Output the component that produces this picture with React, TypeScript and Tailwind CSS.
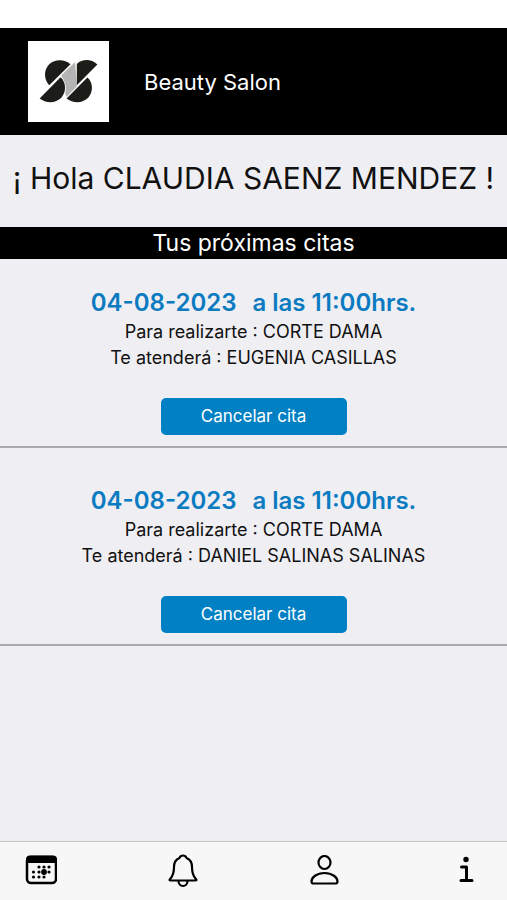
const appointments = [
  { date: "04-08-2023", time: "11:00hrs.", service: "CORTE DAMA", stylist: "EUGENIA CASILLAS" },
  { date: "04-08-2023", time: "11:00hrs.", service: "CORTE DAMA", stylist: "DANIEL SALINAS SALINAS" },
];

function Logo() {
  return (
    <svg viewBox="85 64 244 244" className="size-[81px] shrink-0 bg-white" role="img" aria-label="Beauty Salon">
      <path d="M227 127 L185 168 Q204 196 197 222 L201 233 L232 201 Z" fill="#b3b4b3" />
      <path d="M213 134 C195 117 165 118 149 134 C133 150 131 178 149 197 Z" fill="#1c1c19" />
      <path d="M183 173 C200 188 201 216 186 234 C168 253 139 252 120 237 Z" fill="#1c1c19" />
      <path d="M232 133 C250 117 276 118 294 135 L232 197 Z" fill="#1c1c19" />
      <path d="M264 174 C281 189 282 216 267 234 C249 253 220 252 201 237 Z" fill="#1c1c19" />
    </svg>
  );
}

function CalendarIcon() {
  const dots = [
    [39, 31], [44, 31], [49, 31],
    [33.5, 36], [39, 36], [49, 36],
    [33.5, 41], [39, 41], [44, 41],
  ];
  return (
    <svg viewBox="25 19 32 32" className="size-8" aria-hidden="true">
      <rect x="27" y="21" width="29" height="26" rx="4" fill="#f7f7f7" stroke="#000" strokeWidth="2.500" />
      <path d="M26 27v-3.500a4 4 0 0 1 4-4h23a4 4 0 0 1 4 4v3.500z" />
      {dots.map(([x, y]) => (
        <circle key={`${x}-${y}`} cx={x} cy={y} r="1.600" />
      ))}
      <circle cx="44" cy="36" r="2.900" />
    </svg>
  );
}

function BellIcon() {
  return (
    <svg viewBox="0 0 32 34" className="h-[34px] w-8" fill="none" stroke="#000" strokeWidth="2.200" strokeLinejoin="round" aria-hidden="true">
      <path d="M16 1.500c-2 0-3 1-3.500 2.500c-4 1.500-5.500 4.500-5.500 9c0 5-.500 8-3.500 11.500c-1.500 1.700-1.500 2 .500 2h24c2 0 2-.300 .500-2c-3-3.500-3.500-6.500-3.500-11.500c0-4.500-1.500-7.500-5.500-9c-.500-1.500-1.500-2.500-3.500-2.500z" />
      <path d="M11.500 27c0 3 2 5 4.500 5s4.500-2 4.500-5" />
    </svg>
  );
}

function PersonIcon() {
  return (
    <svg viewBox="0 0 32 32" className="size-8" fill="none" stroke="#000" strokeWidth="2.200" strokeLinejoin="round" aria-hidden="true">
      <ellipse cx="16.500" cy="7.500" rx="6" ry="6.500" />
      <path d="M5.500 28.500h22c1.300 0 2-.700 2-2c0-4-5-8.500-13-8.500s-13 4.500-13 8.500c0 1.300 .700 2 2 2z" />
    </svg>
  );
}

function InfoIcon() {
  return (
    <svg viewBox="0 0 32 32" className="size-8" fill="none" stroke="#000" strokeWidth="3" strokeLinecap="round" strokeLinejoin="round" aria-hidden="true">
      <circle cx="16" cy="4.500" r="2.700" fill="#000" stroke="none" />
      <path d="M11.500 12h5v13M11 25.500h11" />
    </svg>
  );
}

const tabs = [
  { label: "Citas", Icon: CalendarIcon },
  { label: "Notificaciones", Icon: BellIcon },
  { label: "Perfil", Icon: PersonIcon },
  { label: "Información", Icon: InfoIcon },
];

export default function App() {
  return (
    <div className="flex min-h-screen flex-col bg-white pt-7 font-['Inter','Liberation_Sans',sans-serif] text-[#111]">
      <header className="flex items-center gap-[35px] bg-black px-7 py-[13px] text-white">
        <Logo />
        <span className="text-[22px] leading-7">Beauty Salon</span>
      </header>
      <main className="grow bg-[#efeef3]">
        <h1 className="pt-[21px] pb-[27px] text-center text-[30px] leading-[44px] whitespace-nowrap">¡ Hola CLAUDIA SAENZ MENDEZ !</h1>
        <h2 className="bg-black text-center text-[23px] leading-[32px] text-white">Tus próximas citas</h2>
        <div className="flex flex-col gap-[9px]">
          {appointments.map((a) => (
            <section key={a.stylist} className="flex flex-col items-center border-b-2 border-[#a9a9ac] pt-7 pb-[11px] text-center">
              <h3 className="flex gap-4 text-[24px] leading-[32px] font-semibold text-[#0b7bc1]">
                <span>{a.date}</span>
                <span>a las {a.time}</span>
              </h3>
              <p className="text-[18px] leading-[26px]">Para realizarte : {a.service}</p>
              <p className="text-[18px] leading-[26px]">Te atenderá : {a.stylist}</p>
              <button type="button" className="mt-[27px] h-[37px] w-[186px] rounded-[5px] bg-[#0280c4] text-[17px] text-white">
                Cancelar cita
              </button>
            </section>
          ))}
        </div>
      </main>
      <nav className="flex h-[59px] items-center justify-between border-t border-[#c6c6c8] bg-[#f7f7f7] px-[25px]">
        {tabs.map(({ label, Icon }) => (
          <button key={label} type="button" aria-label={label}>
            <Icon />
          </button>
        ))}
      </nav>
    </div>
  );
}
